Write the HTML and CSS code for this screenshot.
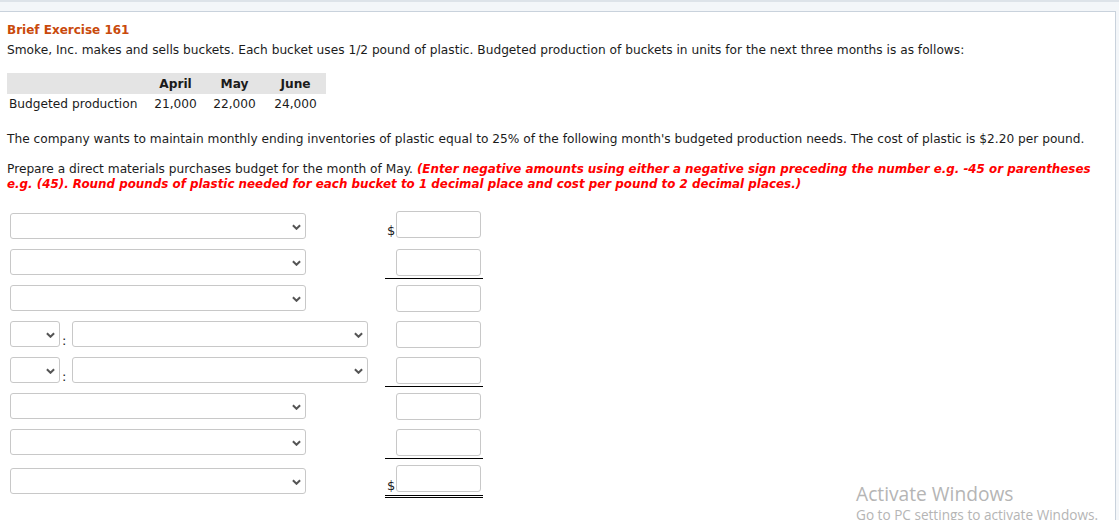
FILE: index.html
```html
<!DOCTYPE html>
<html lang="en">
<head>
<meta charset="utf-8">
<title>Brief Exercise 161</title>
<link rel="stylesheet" href="styles.css">
</head>
<body>
<main class="panel">
  <h1 class="title">Brief Exercise 161</h1>
  <p class="intro">Smoke, Inc. makes and sells buckets. Each bucket uses 1/2 pound of plastic. Budgeted production of buckets in units for the next three months is as follows:</p>

  <table class="prod">
    <thead>
      <tr><th class="lbl"></th><th>April</th><th>May</th><th>June</th></tr>
    </thead>
    <tbody>
      <tr><td class="lbl">Budgeted production</td><td>21,000</td><td>22,000</td><td>24,000</td></tr>
    </tbody>
  </table>

  <p class="info">The company wants to maintain monthly ending inventories of plastic equal to 25% of the following month's budgeted production needs. The cost of plastic is $2.20 per pound.</p>

  <p class="task">Prepare a direct materials purchases budget for the month of May. <span class="hint">(Enter negative amounts using either a negative sign preceding the number e.g. -45 or parentheses e.g. (45). Round pounds of plastic needed for each bucket to 1 decimal place and cost per pound to 2 decimal places.)</span></p>

  <div class="budget">
    <div class="row">
      <div class="left"><span class="sel"><select></select><svg class="chev" viewBox="0 0 10 6"><path d="M1 1 L5 5 L9 1"/></svg></span></div>
      <div class="amt dollar"><span class="cur">$</span><input type="text"></div>
    </div>
    <div class="row">
      <div class="left"><span class="sel"><select></select><svg class="chev" viewBox="0 0 10 6"><path d="M1 1 L5 5 L9 1"/></svg></span></div>
      <div class="amt ruled"><span class="cur"></span><input type="text"></div>
    </div>
    <div class="row">
      <div class="left"><span class="sel"><select></select><svg class="chev" viewBox="0 0 10 6"><path d="M1 1 L5 5 L9 1"/></svg></span></div>
      <div class="amt"><span class="cur"></span><input type="text"></div>
    </div>
    <div class="row">
      <div class="left"><span class="sel small"><select></select><svg class="chev" viewBox="0 0 10 6"><path d="M1 1 L5 5 L9 1"/></svg></span><span class="colon">:</span><span class="sel"><select></select><svg class="chev" viewBox="0 0 10 6"><path d="M1 1 L5 5 L9 1"/></svg></span></div>
      <div class="amt"><span class="cur"></span><input type="text"></div>
    </div>
    <div class="row">
      <div class="left"><span class="sel small"><select></select><svg class="chev" viewBox="0 0 10 6"><path d="M1 1 L5 5 L9 1"/></svg></span><span class="colon">:</span><span class="sel"><select></select><svg class="chev" viewBox="0 0 10 6"><path d="M1 1 L5 5 L9 1"/></svg></span></div>
      <div class="amt ruled"><span class="cur"></span><input type="text"></div>
    </div>
    <div class="row">
      <div class="left"><span class="sel"><select></select><svg class="chev" viewBox="0 0 10 6"><path d="M1 1 L5 5 L9 1"/></svg></span></div>
      <div class="amt"><span class="cur"></span><input type="text"></div>
    </div>
    <div class="row">
      <div class="left"><span class="sel"><select></select><svg class="chev" viewBox="0 0 10 6"><path d="M1 1 L5 5 L9 1"/></svg></span></div>
      <div class="amt ruled"><span class="cur"></span><input type="text"></div>
    </div>
    <div class="row last">
      <div class="left"><span class="sel"><select></select><svg class="chev" viewBox="0 0 10 6"><path d="M1 1 L5 5 L9 1"/></svg></span></div>
      <div class="amt dollar double"><span class="cur">$</span><input type="text"></div>
    </div>
  </div>
</main>

<div class="watermark">
  <div class="wm-title">Activate Windows</div>
  <div class="wm-sub">Go to PC settings to activate Windows.</div>
</div>
</body>
</html>
```

FILE: styles.css
```css
html, body {
  margin: 0;
  padding: 0;
}

body {
  background: #f3f6f9;
  border-top: 2px solid #dde3e9;
  font-family: "DejaVu Sans", Verdana, sans-serif;
  font-size: 12.2px;
  color: #1b1b1b;
  height: 518px;
  overflow: hidden;
  position: relative;
}

.panel {
  margin-top: 9px;
  width: 1108px;
  height: 520px;
  background: #ffffff;
  border-top: 1px solid #c9d2dc;
  border-right: 1px solid #c9d2dc;
  padding: 0 0 0 7px;
}

.title {
  margin: 0;
  padding-top: 11px;
  font-size: 12px;
  line-height: 15px;
  font-weight: bold;
  color: #c94a0c;
}

.intro {
  margin: 5px 0 0;
  line-height: 15px;
}

.prod {
  margin-top: 15px;
  border-collapse: collapse;
  font-size: 12.2px;
}

.prod th {
  background: #e4e4e4;
  height: 21px;
  padding: 0;
  font-weight: bold;
  text-align: center;
}

.prod td {
  height: 20px;
  padding: 0;
  text-align: center;
}

.prod .lbl {
  width: 138px;
  text-align: left;
  padding-left: 2px;
}

.prod th:nth-child(2), .prod td:nth-child(2) { width: 57px; }
.prod th:nth-child(3), .prod td:nth-child(3) { width: 61px; }
.prod th:nth-child(4), .prod td:nth-child(4) { width: 61px; }

.info {
  margin: 18px 0 0;
  line-height: 15px;
}

.task {
  margin: 15px 0 0;
  line-height: 15px;
}

.hint {
  color: #ff0000;
  font-weight: bold;
  font-style: italic;
  font-size: 11.9px;
}

.budget {
  margin-top: 21px;
  display: flex;
  flex-direction: column;
}

.row {
  display: grid;
  grid-template-columns: 378px 98px;
  height: 36px;
  align-items: start;
}

.row.last {
  margin-top: 3px;
}

.left {
  display: flex;
  align-items: flex-end;
  padding-left: 3px;
}

.sel {
  position: relative;
  display: block;
  width: 296px;
  height: 26px;
}

.sel.small {
  width: 50px;
}

.sel select {
  appearance: none;
  -webkit-appearance: none;
  width: 100%;
  height: 100%;
  margin: 0;
  border: 1px solid #c8c8c8;
  border-radius: 3px;
  background: #ffffff;
  box-sizing: border-box;
}

.chev {
  position: absolute;
  right: 5px;
  top: 11px;
  width: 9px;
  height: 6px;
  pointer-events: none;
}

.chev path {
  fill: none;
  stroke: #555555;
  stroke-width: 2.2;
}

.colon {
  width: 12px;
  padding-left: 2px;
  box-sizing: border-box;
  line-height: 13px;
  font-size: 13px;
}

.amt {
  display: flex;
  align-items: flex-end;
  height: 29px;
  padding-right: 2px;
}

.amt.dollar {
  margin-top: -2px;
}

.amt.ruled {
  height: 29px;
  border-bottom: 1px solid #000000;
}

.amt.double {
  height: 30px;
  margin-top: -3px;
  border-bottom: 3px double #000000;
}

.cur {
  width: 11px;
  padding-left: 2px;
  box-sizing: border-box;
  font-size: 13px;
  line-height: 14px;
  margin-bottom: 2px;
}

.amt input {
  width: 85px;
  height: 27px;
  box-sizing: border-box;
  margin: 0 0 2px;
  border: 1px solid #c8c8c8;
  border-radius: 3px;
  background: #ffffff;
  align-self: flex-start;
}

.watermark {
  position: absolute;
  left: 856px;
  top: 480px;
  color: #b5b5b5;
  font-family: "Open Sans", "Noto Sans", sans-serif;
  pointer-events: none;
}

.wm-title {
  font-size: 19.2px;
  line-height: 24px;
}

.wm-sub {
  font-size: 13.6px;
  line-height: 18px;
}
```
